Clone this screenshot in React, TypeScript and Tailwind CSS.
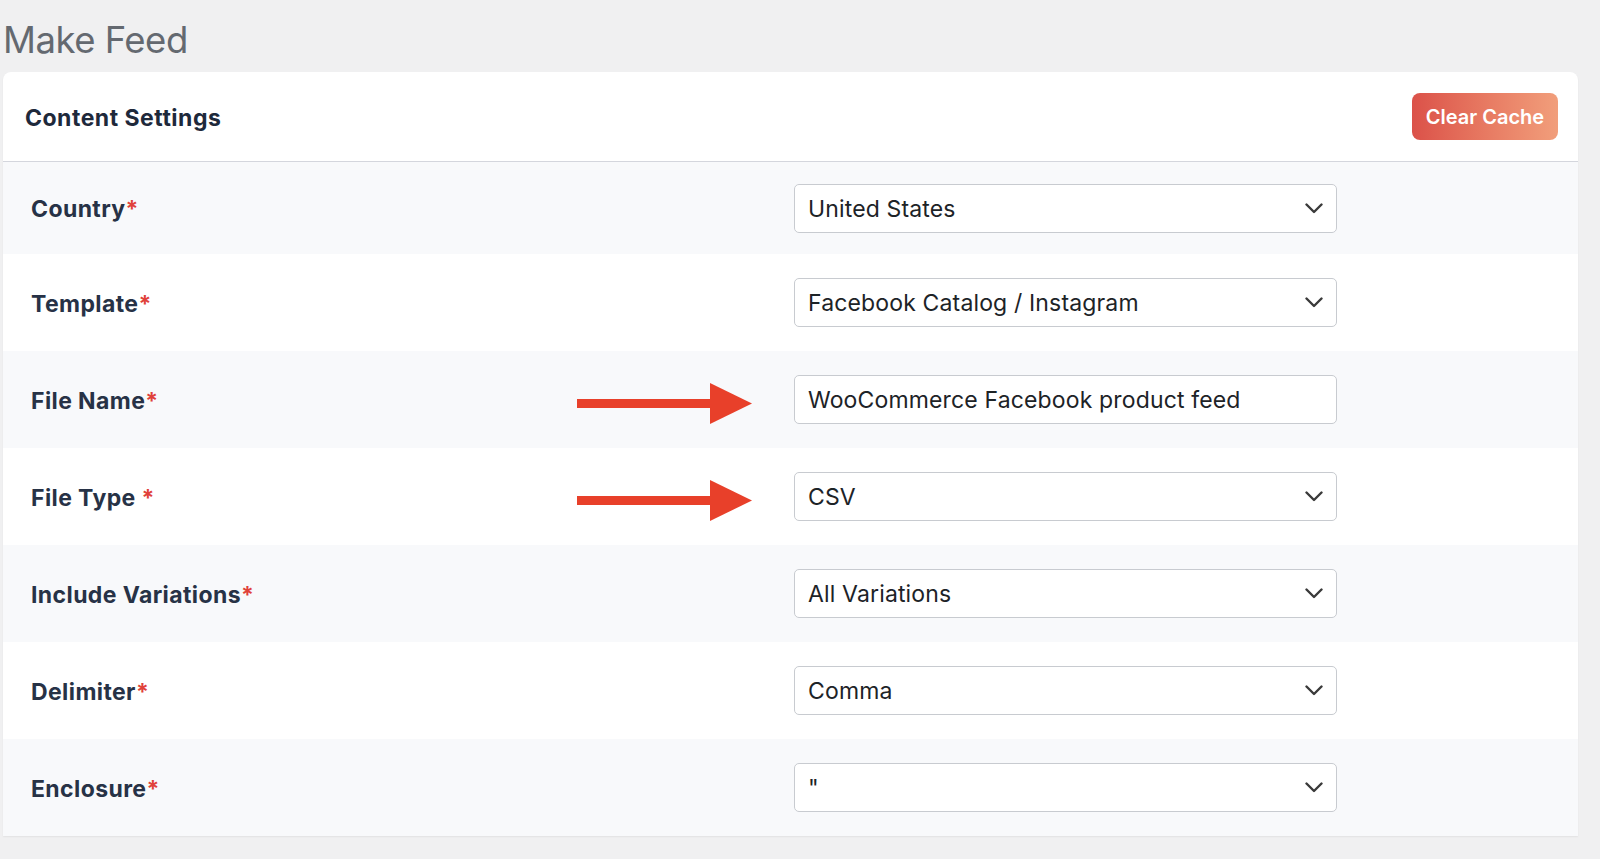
import React from 'react';

type Field = {
  id: string;
  label: string;
  spaced?: boolean;
  value: string;
  kind: 'select' | 'input';
  arrow?: boolean;
};

const FIELDS: Field[] = [
  { id: 'country', label: 'Country', value: 'United States', kind: 'select' },
  { id: 'template', label: 'Template', value: 'Facebook Catalog / Instagram', kind: 'select' },
  { id: 'file-name', label: 'File Name', value: 'WooCommerce Facebook product feed', kind: 'input', arrow: true },
  { id: 'file-type', label: 'File Type', spaced: true, value: 'CSV', kind: 'select', arrow: true },
  { id: 'variations', label: 'Include Variations', value: 'All Variations', kind: 'select' },
  { id: 'delimiter', label: 'Delimiter', value: 'Comma', kind: 'select' },
  { id: 'enclosure', label: 'Enclosure', value: '"', kind: 'select' },
];

const Arrow = () => (
  <svg width="175" height="41" viewBox="0 0 175 41" className="mt-[7px] shrink-0">
    <rect x="0" y="16" width="136" height="9" fill="#e8402a" />
    <polygon points="133,0 175,20.5 133,41" fill="#e8402a" />
  </svg>
);

const Chevron = () => (
  <svg width="18" height="11" viewBox="0 0 18 11" fill="none" className="shrink-0">
    <path d="M1.5 1.5 L9 9 L16.5 1.5" stroke="#3a3a3a" strokeWidth="2.4" strokeLinecap="round" strokeLinejoin="round" />
  </svg>
);

const App: React.FC = () => {
  return (
    <div
      className="min-h-screen bg-[#f0f0f1] pl-[3px] pr-[22px]"
      style={{ fontFamily: 'Inter, "Noto Sans", sans-serif' }}
    >
      {/* Page title */}
      <div className="h-[72px] pt-[22px]">
        <h1 className="text-[36.5px] leading-none font-normal text-[#646970] tracking-[-0.5px]">Make Feed</h1>
      </div>

      {/* Settings card */}
      <div className="bg-white rounded-t-[8px] shadow-[0_1px_2px_rgba(0,0,0,0.06)] overflow-hidden">
        <div className="h-[90px] flex items-center justify-between pl-[22px] pr-[20px] border-b border-[#d4d6dd]">
          <h2 className="text-[23px] font-bold text-[#1e293b] tracking-[0.5px] mt-[4px]">Content Settings</h2>
          <button className="w-[146px] h-[47px] rounded-[8px] bg-gradient-to-r from-[#db5149] to-[#f19e7b] text-white text-[20px] font-semibold">
            Clear Cache
          </button>
        </div>

        {FIELDS.map((f, i) => (
          <div
            key={f.id}
            className={`flex items-center ${i === 0 ? 'h-[92px]' : 'h-[97px]'} ${i % 2 === 0 ? 'bg-[#f8f9fb]' : 'bg-white'}`}
          >
            <div className="w-[791px] shrink-0 flex items-center justify-between pl-[28px] pr-[42px]">
              <label className="text-[23px] font-bold text-[#273246] tracking-[0.4px] mt-[3px]">
                {f.label}
                {f.spaced ? ' ' : ''}
                <span className="text-[#e0413a]">*</span>
              </label>
              {f.arrow && <Arrow />}
            </div>
            <div className="w-[543px] h-[49px] flex items-center justify-between bg-white border border-[#c8cbd0] rounded-[5px] pl-[13px] pr-[13px]">
              <span className="text-[23px] text-[#1d2327] tracking-[0.15px] truncate mt-[2px]">{f.value}</span>
              {f.kind === 'select' && <Chevron />}
            </div>
          </div>
        ))}
      </div>
    </div>
  );
};

export default App;
